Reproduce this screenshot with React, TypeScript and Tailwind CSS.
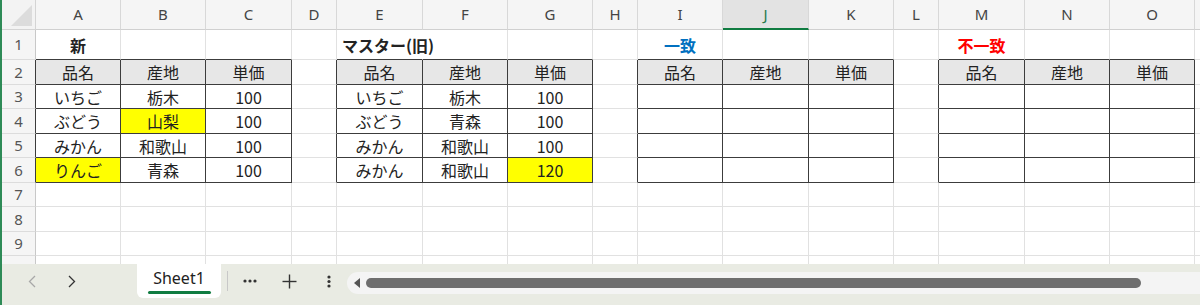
import React from "react";

type Cell = {
  text?: string;
  bg?: string;
  align?: "left" | "center";
  bold?: boolean;
  color?: string;
  spill?: boolean;
};

const cols = ["A", "B", "C", "D", "E", "F", "G", "H", "I", "J", "K", "L", "M", "N", "O"];
const rowHeights = [30, 25, 24, 25, 24, 25, 24, 25, 24, 25];

// table ranges: [firstCol, lastCol] over rows 2-6
const tables: [number, number][] = [
  [0, 2],
  [4, 6],
  [8, 10],
  [12, 14],
];

const inTable = (c: number, r: number) =>
  r >= 2 && r <= 6 && tables.some(([a, b]) => c >= a && c <= b);

const isHead = (c: number, r: number) => r === 2 && inTable(c, r);

const cells: Record<string, Cell> = {
  A1: { text: "新", bold: true },
  E1: { text: "マスター(旧)", bold: true, align: "left", spill: true },
  I1: { text: "一致", bold: true, color: "text-[#0070c0]" },
  M1: { text: "不一致", bold: true, color: "text-[#ff0000]" },
  A3: { text: "いちご" },
  B3: { text: "栃木" },
  C3: { text: "100" },
  A4: { text: "ぶどう" },
  B4: { text: "山梨", bg: "bg-[#ffff00]" },
  C4: { text: "100" },
  A5: { text: "みかん" },
  B5: { text: "和歌山" },
  C5: { text: "100" },
  A6: { text: "りんご", bg: "bg-[#ffff00]" },
  B6: { text: "青森" },
  C6: { text: "100" },
  E3: { text: "いちご" },
  F3: { text: "栃木" },
  G3: { text: "100" },
  E4: { text: "ぶどう" },
  F4: { text: "青森" },
  G4: { text: "100" },
  E5: { text: "みかん" },
  F5: { text: "和歌山" },
  G5: { text: "100" },
  E6: { text: "みかん" },
  F6: { text: "和歌山" },
  G6: { text: "120", bg: "bg-[#ffff00]" },
};

// header labels for every table
tables.forEach(([a]) => {
  cells[cols[a] + "2"] = { text: "品名" };
  cells[cols[a + 1] + "2"] = { text: "産地" };
  cells[cols[a + 2] + "2"] = { text: "単価" };
});

const jp = "font-['Noto_Sans_CJK_JP','Noto_Sans',sans-serif]";

const GridCell = ({ c, r }: { c: number; r: number }) => {
  const cell = cells[cols[c] + r] || {};
  const darkR = inTable(c, r) || inTable(c + 1, r);
  const darkB = inTable(c, r) || inTable(c, r + 1);
  const bg = cell.bg ? cell.bg : isHead(c, r) ? "bg-[#e7e7e7]" : "bg-white";
  return (
    <div
      className={`flex items-center whitespace-nowrap text-[16px] leading-none ${jp} border-r border-b ${
        darkR ? "border-r-[#3c3c3c]" : cell.spill ? "border-r-transparent" : "border-r-[#e1e1e1]"
      } ${darkB ? "border-b-[#3c3c3c]" : "border-b-[#e1e1e1]"} ${bg} ${
        cell.align === "left" ? "justify-start pl-[5px] overflow-visible relative z-10" : "justify-center overflow-hidden"
      } ${cell.bold ? "font-bold" : ""} ${cell.color ? cell.color : "text-[#222]"}`}
    >
      {cell.text}
    </div>
  );
};

const Corner = () => (
  <div className="bg-[#f3f3f3] border-r border-b border-[#d4d4d4] flex items-end justify-end pr-[3px] pb-[3px]">
    <svg width="21" height="21" viewBox="0 0 21 21">
      <polygon points="21,0 21,21 0,21" fill="#dcdcdc" />
    </svg>
  </div>
);

const Sheet = () => (
  <div className="h-[264px] overflow-hidden">
    <div className="grid grid-cols-[34px_85px_85px_86px_45px_86px_85px_85px_45px_85px_86px_85px_45px_86px_85px_85px_1fr] grid-rows-[30px_30px_25px_24px_25px_24px_25px_24px_25px_24px_25px]">
      {/* column headers */}
      <Corner />
      {cols.map((c) => (
        <div
          key={c}
          className={`flex items-center justify-center text-[15px] font-['Noto_Sans',sans-serif] border-r border-[#d8d8d8] ${
            c === "J"
              ? "bg-[#e3e3e3] text-[#2a7a4a] border-b-2 border-b-[#107c41]"
              : "bg-[#f5f5f5] text-[#444] border-b border-b-[#d0d0d0]"
          }`}
        >
          {c}
        </div>
      ))}
      <div className="bg-[#f5f5f5] border-b border-[#d0d0d0]" />

      {rowHeights.map((_, i) => {
        const r = i + 1;
        return (
          <React.Fragment key={r}>
            <div
              className={`flex items-center justify-center bg-[#f5f5f5] text-[15px] text-[#555] font-['Noto_Sans',sans-serif] border-b border-b-[#dcdcdc] border-r ${
                inTable(0, r) ? "border-r-[#3c3c3c]" : "border-r-[#c8c8c8]"
              }`}
            >
              {r}
            </div>
            {cols.map((_, c) => (
              <GridCell key={c} c={c} r={r} />
            ))}
            <div className="bg-white border-b border-[#e1e1e1]" />
          </React.Fragment>
        );
      })}
    </div>
  </div>
);

const TabBar = () => (
  <div className="h-[41px] bg-[#e9ebe3] flex items-start">
    <div className="w-[135px] h-[34px] flex items-center">
      <svg width="8" height="13" viewBox="0 0 8 13" className="ml-[26px]">
        <polyline points="7,1 1.5,6.5 7,12" fill="none" stroke="#a8a8a8" strokeWidth="1.3" />
      </svg>
      <svg width="8" height="13" viewBox="0 0 8 13" className="ml-[32px]">
        <polyline points="1,1 6.5,6.5 1,12" fill="none" stroke="#333" strokeWidth="1.3" />
      </svg>
    </div>
    <div className="w-[84px] h-[34px] bg-white rounded-b-[6px] flex flex-col items-center justify-center">
      <span className="text-[16px] leading-none text-[#222] font-['Noto_Sans',sans-serif] mt-[2px]">Sheet1</span>
      <div className="w-[63px] h-[3px] bg-[#107c41] mt-[5px] rounded-full" />
    </div>
    <div className="h-[34px] flex items-center">
      <div className="w-px h-[20px] bg-[#c8c8c8] ml-[6px]" />
      <svg width="14" height="4" viewBox="0 0 14 4" className="ml-[15px]">
        <circle cx="2" cy="2" r="1.6" fill="#333" />
        <circle cx="7" cy="2" r="1.6" fill="#333" />
        <circle cx="12" cy="2" r="1.6" fill="#333" />
      </svg>
      <svg width="15" height="15" viewBox="0 0 15 15" className="ml-[25px]">
        <line x1="7.5" y1="0.5" x2="7.5" y2="14.5" stroke="#333" strokeWidth="1.4" />
        <line x1="0.5" y1="7.5" x2="14.5" y2="7.5" stroke="#333" strokeWidth="1.4" />
      </svg>
      <svg width="4" height="13" viewBox="0 0 4 13" className="ml-[30px]">
        <circle cx="2" cy="2" r="1.6" fill="#333" />
        <circle cx="2" cy="6.5" r="1.6" fill="#333" />
        <circle cx="2" cy="11" r="1.6" fill="#333" />
      </svg>
    </div>
    <div className="flex-1 ml-[16px] mt-[8px] h-[22px] bg-[#f4f4f4] rounded-l-full flex items-center">
      <svg width="6" height="10" viewBox="0 0 6 10" className="ml-[7px]">
        <polygon points="6,0 6,10 0,5" fill="#555" />
      </svg>
      <div className="ml-[6px] w-[775px] h-[10px] bg-[#6e6e6e] rounded-full" />
    </div>
  </div>
);

export default function App() {
  return (
    <div className="w-[1200px] h-[305px] flex bg-white overflow-hidden">
      <div className="w-[2px] bg-[#2e8b57]" />
      <div className="flex-1 flex flex-col">
        <Sheet />
        <TabBar />
      </div>
    </div>
  );
}
